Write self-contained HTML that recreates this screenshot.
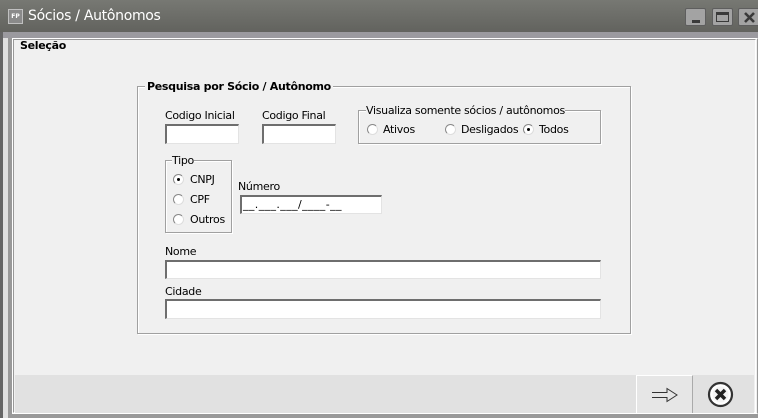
<!DOCTYPE html>
<html><head><meta charset="utf-8"><style>
*{margin:0;padding:0;box-sizing:border-box}
body{width:758px;height:418px;overflow:hidden;background:#f0f0f0;font-family:Tahoma,"DejaVu Sans","Liberation Sans",sans-serif;font-size:11px;color:#000;position:relative}
.a{position:absolute}
.t{font-size:11px;letter-spacing:-0.3px;white-space:nowrap}
.gb{position:absolute;border:1px solid #a0a0a0;box-shadow:1px 1px 0 #fff, inset 1px 1px 0 #fff}
.lg{position:absolute;background:#f0f0f0;white-space:nowrap;letter-spacing:-0.3px}
.in{position:absolute;background:#fff;border-top:2px solid #6e6e6e;border-left:2px solid #6e6e6e;border-right:1px solid #e3e3e3;border-bottom:1px solid #e3e3e3}
.r{position:absolute;width:11px;height:11px;border-radius:50%;background:#fff;border:1px solid #888;border-right-color:#ddd;border-bottom-color:#ddd}
.r.on::after{content:"";position:absolute;left:3px;top:3px;width:3px;height:3px;border-radius:50%;background:#000}
</style></head><body>
<div class="a" style="left:0;top:0;width:758px;height:32px;background:linear-gradient(#777873,#62635e)"></div>
<div class="a" style="left:8px;top:9px;width:15px;height:15px;background:#8a8a8a;border:1px solid #c0c0c0;color:#fff;font-size:6px;line-height:13px;text-align:center;font-weight:bold">FP</div>
<div class="a" style="left:28px;top:8px;color:#fff;font-size:14px;font-family:'DejaVu Sans',sans-serif;letter-spacing:-0.3px">Sócios / Autônomos</div>
<div class="a" style="left:685px;top:8px;width:21px;height:18px;background:#a3a3a3;border:1px solid #5e5e5e;border-radius:2px"><div class="a" style="left:6px;top:11px;width:8px;height:3px;background:#3a3a3a"></div></div>
<div class="a" style="left:712px;top:8px;width:21px;height:18px;background:#a3a3a3;border:1px solid #5e5e5e;border-radius:2px"><div class="a" style="left:3px;top:3px;width:13px;height:10px;border:1px solid #3a3a3a;border-top-width:3px"></div></div>
<div class="a" style="left:738px;top:8px;width:24px;height:18px;background:#a3a3a3;border:1px solid #5e5e5e;border-radius:2px"><svg class="a" style="left:5px;top:3px" width="11" height="11" viewBox="0 0 11 11"><path d="M1 1L10 10M10 1L1 10" stroke="#3a3a3a" stroke-width="2.6"/></svg></div>
<div class="a" style="left:0;top:32px;width:758px;height:6px;background:#9b9a9f"></div>
<div class="a" style="left:0;top:32px;width:3px;height:386px;background:#656565"></div>
<div class="a" style="left:3px;top:38px;width:5px;height:380px;background:#e0e0e0"></div>
<div class="a" style="left:8px;top:38px;width:4px;height:380px;background:#999"></div>
<div class="a" style="left:8px;top:414px;width:750px;height:4px;background:#999"></div>
<div class="a" style="left:12px;top:38px;width:746px;height:376px;border:1px solid #fff;border-right-color:#999"></div>
<div class="a" style="left:13px;top:39px;width:743px;height:374px;border:1px solid #999;border-right:1px solid #fff;border-bottom:1px solid #fff"></div>
<div class="a" style="left:15px;top:375px;width:739px;height:38px;background:#e1e1e1"></div>
<div class="lg" style="left:20px;top:39px;font-weight:bold;background:transparent">Seleção</div>

<div class="gb" style="left:137px;top:86px;width:494px;height:248px"></div>
<div class="lg" style="left:145px;top:80px;font-weight:bold;padding:0 2px">Pesquisa por Sócio / Autônomo</div>

<div class="a t" style="left:165px;top:109px">Codigo Inicial</div>
<div class="in" style="left:165px;top:124px;width:74px;height:20px"></div>
<div class="a t" style="left:262px;top:109px">Codigo Final</div>
<div class="in" style="left:262px;top:124px;width:74px;height:20px"></div>

<div class="gb" style="left:358px;top:110px;width:243px;height:34px"></div>
<div class="lg" style="left:366px;top:104px">Visualiza somente sócios / autônomos</div>
<div class="r" style="left:367px;top:124px"></div><div class="a t" style="left:383px;top:123px">Ativos</div>
<div class="r" style="left:445px;top:124px"></div><div class="a t" style="left:461px;top:123px">Desligados</div>
<div class="r on" style="left:523px;top:124px"></div><div class="a t" style="left:539px;top:123px">Todos</div>

<div class="gb" style="left:165px;top:160px;width:67px;height:73px"></div>
<div class="lg" style="left:172px;top:154px">Tipo</div>
<div class="r on" style="left:173px;top:174px"></div><div class="a t" style="left:190px;top:173px">CNPJ</div>
<div class="r" style="left:173px;top:194px"></div><div class="a t" style="left:190px;top:193px">CPF</div>
<div class="r" style="left:173px;top:214px"></div><div class="a t" style="left:190px;top:213px">Outros</div>

<div class="a t" style="left:238px;top:180px">Número</div>
<div class="in" style="left:240px;top:195px;width:142px;height:19px"><div class="a t" style="left:1px;top:1px;letter-spacing:0.4px">__.___.___/____-__</div></div>

<div class="a t" style="left:165px;top:245px">Nome</div>
<div class="in" style="left:165px;top:260px;width:436px;height:19px"></div>
<div class="a t" style="left:165px;top:285px">Cidade</div>
<div class="in" style="left:165px;top:299px;width:436px;height:20px"></div>

<div class="a" style="left:636px;top:375px;width:57px;height:38px;border:1px solid #fff;border-right-color:#aaa;border-bottom:none;background:#e6e6e6">
<svg class="a" style="left:14px;top:11px" width="28" height="16" viewBox="0 0 28 16"><path d="M1 5.5H16V1.5L26 8L16 14.5V10.5H1" fill="none" stroke="#333" stroke-width="1"/></svg></div>
<svg class="a" style="left:707px;top:381px" width="27" height="27" viewBox="0 0 27 27"><circle cx="13.5" cy="13.5" r="11.5" fill="#fff" stroke="#333" stroke-width="2.2"/><circle cx="13.5" cy="13.5" r="8" fill="#f4f4f4"/><path d="M9 9L18 18M18 9L9 18" stroke="#222" stroke-width="3.5"/></svg>
</body></html>
